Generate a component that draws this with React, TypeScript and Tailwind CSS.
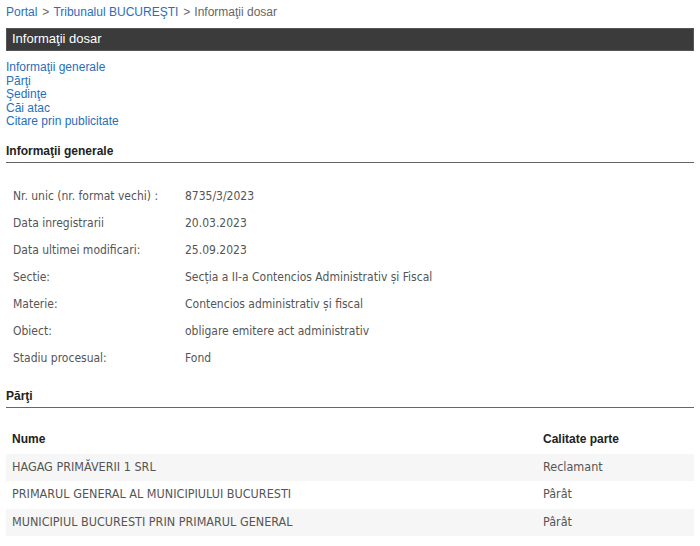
import React from "react";

const info: [string, string][] = [
  ["Nr. unic (nr. format vechi) :", "8735/3/2023"],
  ["Data inregistrarii", "20.03.2023"],
  ["Data ultimei modificari:", "25.09.2023"],
  ["Sectie:", "Secția a II-a Contencios Administrativ și Fiscal"],
  ["Materie:", "Contencios administrativ și fiscal"],
  ["Obiect:", "obligare emitere act administrativ"],
  ["Stadiu procesual:", "Fond"],
];

const parti: [string, string][] = [
  ["HAGAG PRIMĂVERII 1 SRL", "Reclamant"],
  ["PRIMARUL GENERAL AL MUNICIPIULUI BUCURESTI", "Pârât"],
  ["MUNICIPIUL BUCURESTI PRIN PRIMARUL GENERAL", "Pârât"],
];

const links = ["Informaţii generale", "Părţi", "Şedinţe", "Căi atac", "Citare prin publicitate"];

const tahoma = "font-['DejaVu_Sans_Condensed','DejaVu_Sans',sans-serif]";

export default function App() {
  return (
    <div className="w-[700px] h-[546px] overflow-hidden bg-white px-[6px] font-['Liberation_Sans',Arial,sans-serif]">
      {/* breadcrumb */}
      <div className="pt-[4px] h-[28px] text-[12px] leading-[16px] text-[#666]">
        <span className="text-[#2a6ebb]">Portal</span>
        <span className="ml-[5px] mr-[4px]">&gt;</span>
        <span className="text-[#2a6ebb]">Tribunalul BUCUREŞTI</span>
        <span className="ml-[5px] mr-[4px]">&gt;</span>
        <span>Informaţii dosar</span>
      </div>

      {/* title bar */}
      <div className="h-[23px] bg-[#3b3b3b] border border-[#555] px-[5px] text-white text-[13px] leading-[20px]">
        Informaţii dosar
      </div>

      {/* anchors */}
      <div className="mt-[10px] flex flex-col text-[12px] leading-[13.5px] text-[#2a6ebb]">
        {links.map((l) => (
          <span key={l}>{l}</span>
        ))}
      </div>

      {/* informatii generale */}
      <div className="mt-[15px] border-b border-[#666] pb-[3px] text-[12px] font-bold leading-[15px] text-[#222]">
        Informaţii generale
      </div>
      <div className={`mt-[20px] ${tahoma} text-[12px] text-[#555]`}>
        {info.map(([k, v]) => (
          <div key={k} className="flex h-[27px] items-center">
            <div className="w-[179px] pl-[7px]">{k}</div>
            <div>{v}</div>
          </div>
        ))}
      </div>

      {/* parti */}
      <div className="mt-[17px] border-b border-[#666] pb-[3px] text-[12px] font-bold leading-[15px] text-[#222]">
        Părţi
      </div>
      <div className="mt-[17px]">
        <div className="flex h-[28px] mb-[1px] items-center font-bold text-[#222] text-[12px]">
          <div className="flex-1 pl-[6px]">Nume</div>
          <div className="w-[151px]">Calitate parte</div>
        </div>
        {parti.map(([n, c], i) => (
          <div
            key={n}
            className={`flex h-[27.5px] items-center ${tahoma} text-[12.5px] text-[#555] ${i % 2 === 0 ? "bg-[#f6f6f6]" : "bg-white"}`}
          >
            <div className="flex-1 pl-[6px]">{n}</div>
            <div className="w-[151px]">{c}</div>
          </div>
        ))}
      </div>
    </div>
  );
}
